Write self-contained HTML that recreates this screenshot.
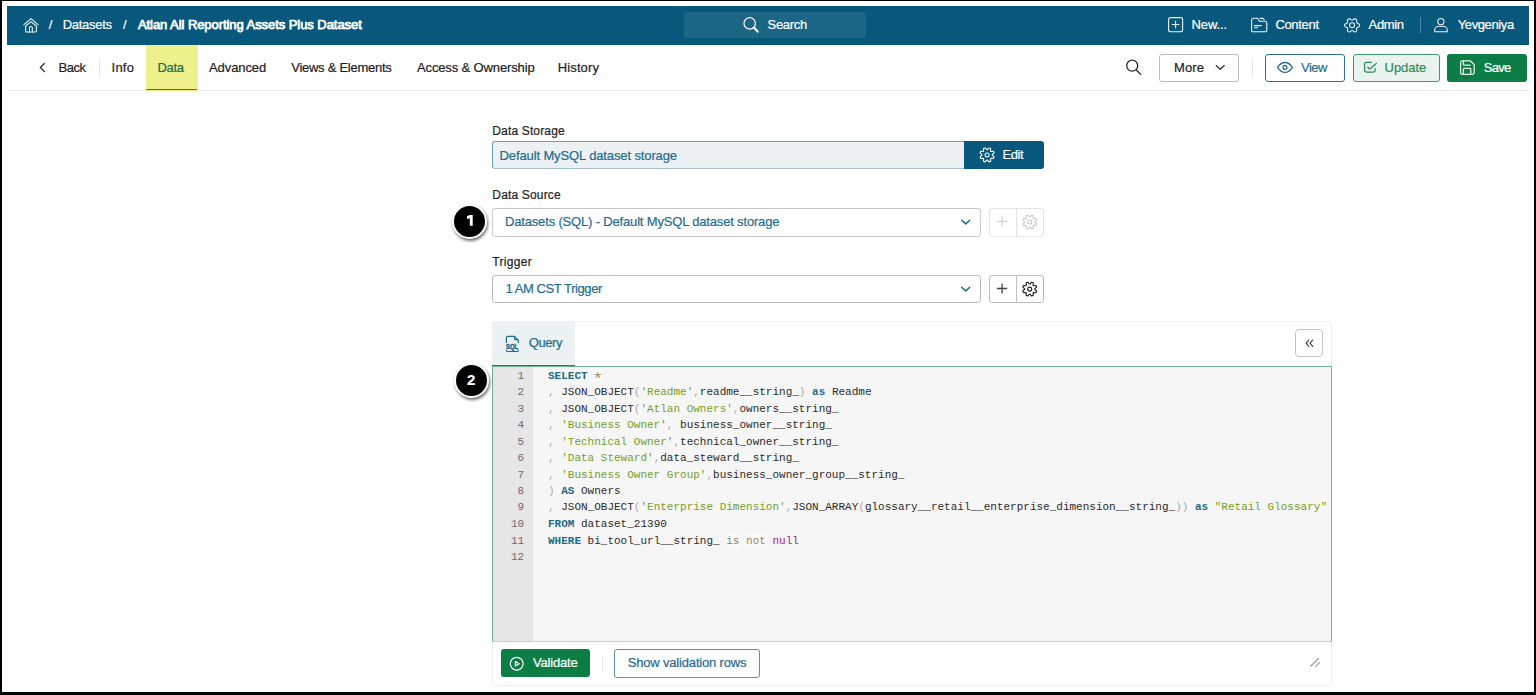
<!DOCTYPE html>
<html><head><meta charset="utf-8">
<style>
html,body{margin:0;padding:0}
body{width:1536px;height:695px;background:#000;position:relative;overflow:hidden;font-family:"Liberation Sans",sans-serif;}
.a{position:absolute;box-sizing:border-box}
.t{position:absolute;white-space:nowrap;line-height:1;font-size:13px;-webkit-text-stroke:0.2px currentColor}
.m{position:absolute;white-space:pre;font-family:"Liberation Mono",monospace;font-size:12px;line-height:18.289px;transform:scale(0.916667,0.9);transform-origin:0 0}
svg{position:absolute;overflow:visible}
.k{color:#1f6b8c;font-weight:bold}.p{color:#a8a8a8}.s{color:#74a02a}.i{color:#2b2b2b}.st{color:#8a7b6a}.op{color:#9c7f56;background:#fbfbfb}.nu{color:#a3247b}
</style></head><body>
<div class="a" style="left:2px;top:1px;width:1532px;height:691px;background:#fff"></div>

<!-- header -->
<div class="a" style="left:7px;top:6px;width:1522px;height:39px;background:#07587c"></div>
<div class="a" style="left:684px;top:12px;width:182px;height:26px;background:#1b6585;border-radius:3px"></div>

<div class="a" style="left:1420px;top:17px;width:1px;height:16px;background:#4d87a3"></div>

<!-- nav -->
<div class="a" style="left:7px;top:90px;width:1522px;height:1px;background:#e9e9e9"></div>
<div class="a" style="left:146px;top:45px;width:52px;height:45.6px;background:#edf08b"></div>
<div class="a" style="left:146px;top:88.7px;width:51px;height:1.4px;background:#3a7655;border-radius:1px"></div>
<div class="a" style="left:99px;top:60px;width:1px;height:16px;background:#e4e4e4"></div>

<!-- buttons -->
<div class="a" style="left:1159px;top:54px;width:80px;height:28px;border:1px solid #bdbdbd;border-radius:3px"></div>
<div class="a" style="left:1252px;top:60px;width:1px;height:16px;background:#e4e4e4"></div>
<div class="a" style="left:1265px;top:54px;width:80px;height:28px;border:1px solid #2f6f90;border-radius:3px"></div>
<div class="a" style="left:1353px;top:54px;width:87px;height:28px;border:1px solid #3e9a66;border-radius:3px;background:#ebf3ef"></div>
<div class="a" style="left:1447px;top:54px;width:80px;height:28px;border-radius:3px;background:#0b7d45"></div>

<!-- form -->
<div class="a" style="left:492px;top:141px;width:474px;height:28px;border:1px solid #6e9db5;border-bottom-color:#a7c3d1;border-right:0;border-radius:3px 0 0 3px;background:#ecf1f4"></div>
<div class="a" style="left:964px;top:141px;width:80px;height:28px;border-radius:0 3px 3px 0;background:#07587c"></div>

<div class="a" style="left:492px;top:208px;width:489px;height:29px;border:1px solid #c9c9c9;border-radius:3px;background:#fff"></div>
<div class="a" style="left:989px;top:208px;width:55px;height:29px;border:1px solid #e3e3e3;border-radius:3px"></div>
<div class="a" style="left:1016px;top:208px;width:1px;height:29px;background:#e3e3e3"></div>

<div class="a" style="left:492px;top:275px;width:489px;height:28px;border:1px solid #bdbdbd;border-radius:3px;background:#fff"></div>
<div class="a" style="left:989px;top:275px;width:55px;height:28px;border:1px solid #bdbdbd;border-radius:3px"></div>
<div class="a" style="left:1016px;top:275px;width:1px;height:28px;background:#bdbdbd"></div>

<!-- query panel -->
<div class="a" style="left:492px;top:321px;width:840px;height:365px;border:1px solid #efefef;border-radius:3px"></div>
<div class="a" style="left:492px;top:321px;width:83px;height:45px;background:#ecf1f4;border-radius:3px 0 0 0"></div>
<div class="a" style="left:492px;top:365px;width:83px;height:1px;background:#2b6f8f"></div>
<div class="a" style="left:1295px;top:329px;width:28px;height:28px;border:1px solid #c4c4c4;border-radius:4px;background:#fff"></div>

<div class="a" style="left:492px;top:366px;width:840px;height:276px;border:1px solid #6fb08d;border-bottom-color:#b5d8c3;background:#f6f6f6"></div>
<div class="a" style="left:493px;top:367px;width:40px;height:274px;background:#e6e6e6"></div>

<div id="code">
<div class="m ln" style="left:493.3px;top:367.6px;width:34px;text-align:right;color:#6b6b6b">1
2
3
4
5
6
7
8
9
10
11
12</div>
<div class="m" style="left:548px;top:367.6px;color:#2b2b2b"><span class="k">SELECT</span>  
<span class="p">, </span><span class="i">JSON_OBJECT</span><span class="p">(</span><span class="s">'Readme'</span><span class="p">,</span><span class="i">readme__string_</span><span class="p">)</span> <span class="k">as</span> <span class="i">Readme</span>
<span class="p">, </span><span class="i">JSON_OBJECT</span><span class="p">(</span><span class="s">'Atlan Owners'</span><span class="p">,</span><span class="i">owners__string_</span>
<span class="p">, </span><span class="s">'Business Owner'</span><span class="p">, </span><span class="i">business_owner__string_</span>
<span class="p">, </span><span class="s">'Technical Owner'</span><span class="p">,</span><span class="i">technical_owner__string_</span>
<span class="p">, </span><span class="s">'Data Steward'</span><span class="p">,</span><span class="i">data_steward__string_</span>
<span class="p">, </span><span class="s">'Business Owner Group'</span><span class="p">,</span><span class="i">business_owner_group__string_</span>
<span class="p">)</span> <span class="k">AS</span> <span class="i">Owners</span>
<span class="p">, </span><span class="i">JSON_OBJECT</span><span class="p">(</span><span class="s">'Enterprise Dimension'</span><span class="p">,</span><span class="i">JSON_ARRAY</span><span class="p">(</span><span class="i">glossary__retail__enterprise_dimension__string_</span><span class="p">))</span> <span class="k">as</span> <span class="s">"Retail Glossary"</span>
<span class="k">FROM</span> <span class="i">dataset_21390</span>
<span class="k">WHERE</span> <span class="i">bi_tool_url__string_</span> <span class="op">is</span> <span class="op">not</span> <span class="nu">null</span>
</div>
</div>

<!-- footer -->
<div class="a" style="left:501px;top:649px;width:89px;height:28px;border-radius:3px;background:#0b7d45"></div>
<div class="a" style="left:602px;top:656px;width:1px;height:16px;background:#e8e8e8"></div>
<div class="a" style="left:614px;top:649px;width:146px;height:29px;border:1px solid #5b8fab;border-radius:3px"></div>

<!-- badges -->
<div class="a" style="left:452px;top:204px;width:35px;height:35px;border-radius:50%;background:#000;border:2px solid #fff;box-shadow:1px 2px 3px rgba(0,0,0,.55)"></div>
<div class="a" style="left:454px;top:363px;width:35px;height:35px;border-radius:50%;background:#000;border:2px solid #fff;box-shadow:1px 2px 3px rgba(0,0,0,.55)"></div>

<div class="t" style="left:48.75px;top:18.40px;font-size:13px;color:#fff;letter-spacing:0.000px">/</div>
<div class="t" style="left:62.75px;top:18.40px;font-size:13px;color:#fff;letter-spacing:-0.293px">Datasets</div>
<div class="t" style="left:123.00px;top:18.40px;font-size:13px;color:#fff;letter-spacing:0.000px">/</div>
<div class="t" style="left:137.90px;top:18.40px;font-size:13px;color:#fff;letter-spacing:-0.060px;-webkit-text-stroke:0.75px #fff">Atlan All Reporting Assets Plus Dataset</div>
<div class="t" style="left:767.50px;top:18.40px;font-size:13px;color:#fff;letter-spacing:-0.292px">Search</div>
<div class="t" style="left:1191.50px;top:18.40px;font-size:13px;color:#fff;letter-spacing:-0.103px">New...</div>
<div class="t" style="left:1275.40px;top:18.40px;font-size:13px;color:#fff;letter-spacing:-0.320px">Content</div>
<div class="t" style="left:1368.60px;top:18.40px;font-size:13px;color:#fff;letter-spacing:-0.367px">Admin</div>
<div class="t" style="left:1457.75px;top:18.40px;font-size:13px;color:#fff;letter-spacing:-0.392px">Yevgeniya</div>
<div class="t" style="left:58.40px;top:60.90px;font-size:13px;color:#222;letter-spacing:-0.400px">Back</div>
<div class="t" style="left:111.50px;top:60.90px;font-size:13px;color:#222;letter-spacing:0.265px">Info</div>
<div class="t" style="left:157.50px;top:60.90px;font-size:13px;color:#1e6b4b;letter-spacing:-0.327px">Data</div>
<div class="t" style="left:209.00px;top:60.90px;font-size:13px;color:#222;letter-spacing:-0.084px">Advanced</div>
<div class="t" style="left:291.25px;top:60.90px;font-size:13px;color:#222;letter-spacing:-0.268px">Views &amp; Elements</div>
<div class="t" style="left:417.00px;top:60.90px;font-size:13px;color:#222;letter-spacing:-0.135px">Access &amp; Ownership</div>
<div class="t" style="left:557.75px;top:60.90px;font-size:13px;color:#222;letter-spacing:0.117px">History</div>
<div class="t" style="left:1174.00px;top:60.90px;font-size:13px;color:#222;letter-spacing:0.121px">More</div>
<div class="t" style="left:1301.00px;top:60.90px;font-size:13px;color:#2a6b8c;letter-spacing:-0.518px">View</div>
<div class="t" style="left:1384.60px;top:60.90px;font-size:13px;color:#2f8a58;letter-spacing:-0.058px">Update</div>
<div class="t" style="left:1483.75px;top:60.90px;font-size:13px;color:#fff;letter-spacing:-0.750px">Save</div>
<div class="t" style="left:492.30px;top:125.44px;font-size:12px;color:#222;letter-spacing:0.151px">Data Storage</div>
<div class="t" style="left:499.60px;top:148.60px;font-size:13px;color:#236b8e;letter-spacing:-0.123px">Default MySQL dataset storage</div>
<div class="t" style="left:1002.50px;top:148.00px;font-size:13px;color:#fff;letter-spacing:-0.430px">Edit</div>
<div class="t" style="left:492.30px;top:188.64px;font-size:12px;color:#222;letter-spacing:0.167px">Data Source</div>
<div class="t" style="left:505.00px;top:215.00px;font-size:13px;color:#1f6b92;letter-spacing:-0.168px">Datasets (SQL) - Default MySQL dataset storage</div>
<div class="t" style="left:492.30px;top:255.54px;font-size:12px;color:#222;letter-spacing:0.322px">Trigger</div>
<div class="t" style="left:505.40px;top:282.20px;font-size:13px;color:#1f6b92;letter-spacing:-0.409px">1 AM CST Trigger</div>
<div class="t" style="left:528.75px;top:335.90px;font-size:13px;color:#1f6b8c;letter-spacing:-0.413px">Query</div>
<div class="t" style="left:533.00px;top:656.00px;font-size:13px;color:#fff;letter-spacing:-0.183px">Validate</div>
<div class="t" style="left:627.75px;top:656.00px;font-size:13px;color:#27698b;letter-spacing:-0.177px">Show validation rows</div>
<div class="t" style="left:467.00px;top:372.30px;font-size:15px;font-weight:bold;color:#fff;letter-spacing:0.000px">2</div>
<svg class="ov" width="1536" height="695" viewBox="0 0 1536 695" style="left:0;top:0"><g fill="none" stroke="#fff" stroke-width="1.05" stroke-linecap="round" stroke-linejoin="round" opacity="0.95">
<path d="M23.7,24.8 L31,18.6 L38.3,24.8"/>
<path d="M25.7,32 V26 L31,21.6 L36.4,26 V30.9 a1.1,1.1 0 0 1 -1.1,1.1 H26.8 a1.1,1.1 0 0 1 -1.1,-1.1 Z"/>
<path d="M29.5,32 V27.8 a1.4,1.4 0 0 1 2.8,0 V32"/>
</g>
<g fill="none" stroke="#fff" stroke-width="1.25" stroke-linecap="round">
<circle cx="749.7" cy="23.4" r="5.7"/>
<path d="M754.3,28.1 L757.6,31.6" stroke-width="2.2"/>
</g>
<g fill="none" stroke="#fff" stroke-width="1.1" stroke-linecap="round" stroke-linejoin="round" opacity="0.93">
<rect x="1168.6" y="17.6" width="14" height="14.1" rx="2"/>
<path d="M1175.6,21.2 V28 M1172.2,24.6 H1179" stroke-width="1"/>
<path d="M1251.6,31 V20.2 a2,2 0 0 1 2,-2 H1257.6 l1.8,3 H1264.8 a2,2 0 0 1 2,2 V30.3 a1.5,1.5 0 0 1 -1.5,1.5 H1253.3 a1.7,1.7 0 0 1 -1.7,-0.8 Z"/>
<path d="M1260.2,18.4 H1263 l1.2,1.3"/>
<path d="M1254.4,25.6 H1261.2 M1254.4,27.7 H1257.6"/>
<path d="M1359.60,25.35 L1359.54,25.82 L1359.36,26.28 L1359.05,26.69 L1358.38,26.98 L1357.70,27.19 L1357.34,27.46 L1357.07,27.73 L1356.86,28.02 L1356.71,28.34 L1356.60,28.70 L1356.54,29.13 L1356.70,29.81 L1356.77,30.52 L1356.56,30.99 L1356.24,31.36 L1355.85,31.65 L1355.40,31.84 L1354.90,31.92 L1354.38,31.86 L1353.78,31.44 L1353.25,30.97 L1352.84,30.81 L1352.46,30.71 L1352.10,30.69 L1351.74,30.71 L1351.36,30.81 L1350.95,30.97 L1350.42,31.44 L1349.82,31.86 L1349.30,31.92 L1348.80,31.84 L1348.35,31.65 L1347.96,31.36 L1347.64,30.99 L1347.43,30.52 L1347.50,29.81 L1347.66,29.13 L1347.60,28.70 L1347.49,28.34 L1347.34,28.02 L1347.13,27.73 L1346.86,27.46 L1346.50,27.19 L1345.82,26.98 L1345.15,26.69 L1344.84,26.28 L1344.66,25.82 L1344.60,25.35 L1344.66,24.88 L1344.84,24.42 L1345.15,24.01 L1345.82,23.72 L1346.50,23.51 L1346.86,23.24 L1347.13,22.97 L1347.34,22.68 L1347.49,22.36 L1347.60,22.00 L1347.66,21.57 L1347.50,20.89 L1347.43,20.18 L1347.64,19.71 L1347.96,19.34 L1348.35,19.05 L1348.80,18.86 L1349.30,18.78 L1349.82,18.84 L1350.42,19.26 L1350.95,19.73 L1351.36,19.89 L1351.74,19.99 L1352.10,20.02 L1352.46,19.99 L1352.84,19.89 L1353.25,19.73 L1353.78,19.26 L1354.38,18.84 L1354.90,18.78 L1355.40,18.86 L1355.85,19.05 L1356.24,19.34 L1356.56,19.71 L1356.77,20.18 L1356.70,20.89 L1356.54,21.57 L1356.60,22.00 L1356.71,22.36 L1356.86,22.68 L1357.07,22.97 L1357.34,23.24 L1357.70,23.51 L1358.38,23.72 L1359.05,24.01 L1359.36,24.42 L1359.54,24.88 Z"/>
<circle cx="1352.1" cy="25.3" r="2.5"/>
<circle cx="1440.9" cy="21.6" r="3.1"/>
<path d="M1434.6,31.4 V30.6 a4.3,4.3 0 0 1 4.3,-4.3 H1443 a4.3,4.3 0 0 1 4.3,4.3 V31.4 a0.4,0.4 0 0 1 -0.4,0.4 H1435 a0.4,0.4 0 0 1 -0.4,-0.4 Z"/>
</g>
<path d="M44.4,63.5 L40.3,67.5 L44.4,71.5" fill="none" stroke="#333" stroke-width="1.3" stroke-linecap="round" stroke-linejoin="round"/>
<g fill="none" stroke="#222" stroke-width="1.25" stroke-linecap="round">
<circle cx="1132.2" cy="65.7" r="5.5"/>
<path d="M1136.3,70 L1140.6,74.4"/>
</g>
<path d="M1216.2,65.6 L1220.2,69.3 L1224.3,65.6" fill="none" stroke="#333" stroke-width="1.3" stroke-linecap="round" stroke-linejoin="round"/>
<g fill="none" stroke="#2a6b8c" stroke-width="1.3" stroke-linecap="round" stroke-linejoin="round">
<path d="M1277.6,67.4 C1279.6,64.1 1282,62.5 1285,62.5 C1288,62.5 1290.4,64.1 1292.4,67.4 C1290.4,70.7 1288,72.4 1285,72.4 C1282,72.4 1279.6,70.7 1277.6,67.4 Z"/>
<circle cx="1285" cy="67.4" r="1.9"/>
</g>
<g fill="none" stroke="#2e8a58" stroke-width="1.3" stroke-linecap="round" stroke-linejoin="round">
<path d="M1371.6,62.3 H1366.4 a1.8,1.8 0 0 0 -1.8,1.8 V70.3 a1.8,1.8 0 0 0 1.8,1.8 H1373.4 a1.8,1.8 0 0 0 1.8,-1.8 V68.6"/>
<path d="M1367.8,67.3 L1369.6,69.1 L1376.3,63.4"/>
</g>
<g fill="none" stroke="#fff" stroke-width="1.25" stroke-linecap="round" stroke-linejoin="round" opacity="0.92">
<path d="M1462.4,60.8 H1470.3 L1474.2,64.7 V72.6 a1.8,1.8 0 0 1 -1.8,1.8 H1462.4 a1.8,1.8 0 0 1 -1.8,-1.8 V62.6 a1.8,1.8 0 0 1 1.8,-1.8 Z"/>
<path d="M1463.4,61 V64.4 a0.8,0.8 0 0 0 0.8,0.8 H1470"/>
<path d="M1463.4,74.3 V69.2 a0.8,0.8 0 0 1 0.8,-0.8 H1470 a0.8,0.8 0 0 1 0.8,0.8 V74.3"/>
</g>
<g fill="none" stroke="#fff" stroke-width="1.05" stroke-linejoin="round">
<path d="M992.29,154.58 L994.13,152.95 L993.45,151.31 L990.99,151.45 L990.55,151.01 L990.69,148.55 L989.05,147.87 L987.42,149.71 L986.78,149.71 L985.15,147.87 L983.51,148.55 L983.65,151.01 L983.21,151.45 L980.75,151.31 L980.07,152.95 L981.91,154.58 L981.91,155.22 L980.07,156.85 L980.75,158.49 L983.21,158.35 L983.65,158.79 L983.51,161.25 L985.15,161.93 L986.78,160.09 L987.42,160.09 L989.05,161.93 L990.69,161.25 L990.55,158.79 L990.99,158.35 L993.45,158.49 L994.13,156.85 L992.29,155.22 Z"/>
<circle cx="987.1" cy="154.9" r="2.0"/>
</g>
<path d="M961.6,220.3 L965.7,223.9 L969.8,220.3" fill="none" stroke="#1f6d8f" stroke-width="1.5" stroke-linecap="round" stroke-linejoin="round"/>
<path d="M1002.1,216.2 V226.6 M996.9,221.4 H1007.3" fill="none" stroke="#d2d2d2" stroke-width="1.1"/>
<g fill="none" stroke="#c8c8c8" stroke-width="1.05" stroke-linejoin="round"><path d="M1034.79,221.69 L1036.64,220.08 L1035.97,218.45 L1033.52,218.62 L1033.08,218.18 L1033.25,215.73 L1031.62,215.06 L1030.01,216.91 L1029.39,216.91 L1027.78,215.06 L1026.15,215.73 L1026.32,218.18 L1025.88,218.62 L1023.43,218.45 L1022.76,220.08 L1024.61,221.69 L1024.61,222.31 L1022.76,223.92 L1023.43,225.55 L1025.88,225.38 L1026.32,225.82 L1026.15,228.27 L1027.78,228.94 L1029.39,227.09 L1030.01,227.09 L1031.62,228.94 L1033.25,228.27 L1033.08,225.82 L1033.52,225.38 L1035.97,225.55 L1036.64,223.92 L1034.79,222.31 Z"/><circle cx="1029.7" cy="222" r="2.0"/></g>
<path d="M961.6,287.3 L965.7,290.9 L969.8,287.3" fill="none" stroke="#1f6d8f" stroke-width="1.5" stroke-linecap="round" stroke-linejoin="round"/>
<path d="M1002.1,283.4 V293.6 M996.9,288.5 H1007.2" fill="none" stroke="#444" stroke-width="1.3"/>
<g fill="none" stroke="#222" stroke-width="1.15" stroke-linejoin="round"><path d="M1034.79,288.79 L1036.64,287.18 L1035.97,285.55 L1033.52,285.72 L1033.08,285.28 L1033.25,282.83 L1031.62,282.16 L1030.01,284.01 L1029.39,284.01 L1027.78,282.16 L1026.15,282.83 L1026.32,285.28 L1025.88,285.72 L1023.43,285.55 L1022.76,287.18 L1024.61,288.79 L1024.61,289.41 L1022.76,291.02 L1023.43,292.65 L1025.88,292.48 L1026.32,292.92 L1026.15,295.37 L1027.78,296.04 L1029.39,294.19 L1030.01,294.19 L1031.62,296.04 L1033.25,295.37 L1033.08,292.92 L1033.52,292.48 L1035.97,292.65 L1036.64,291.02 L1034.79,289.41 Z"/><circle cx="1029.7" cy="289.1" r="2.0"/></g>
<g fill="none" stroke="#1f6b8c" stroke-width="1.2" stroke-linecap="round" stroke-linejoin="round">
<path d="M506.4,342.4 V337.8 a1.4,1.4 0 0 1 1.4,-1.4 H514.5 L518.2,340.1 V342.4"/>
<path d="M514.5,336.6 V338.8 a0.8,0.8 0 0 0 0.8,0.8 H518"/>
<path d="M506.4,350.2 a1.3,1.3 0 0 0 1.3,1.3 H517 a1.3,1.3 0 0 0 1.3,-1.3"/>
</g>
<text x="506.1" y="348.8" font-family="Liberation Sans" font-weight="bold" font-size="6.4" fill="#1f6b8c" stroke="#1f6b8c" stroke-width="0.45" textLength="12.0" lengthAdjust="spacingAndGlyphs">SQL</text>
<rect x="593.7" y="368.3" width="8.3" height="13.5" fill="#fafafa"/>
<path d="M597.8,372.3 V375 M597.8,375 L594.9,374.3 M597.8,375 L600.7,374.3 M597.8,375 L596.1,377.4 M597.8,375 L599.5,377.4" fill="none" stroke="#a3865c" stroke-width="1.05" stroke-linecap="round"/>
<path d="M1308.8,340.2 L1306.1,343.2 L1308.8,346.3 M1312.7,340.2 L1310,343.2 L1312.7,346.3" fill="none" stroke="#444" stroke-width="1.25" stroke-linecap="round" stroke-linejoin="round"/>
<g fill="none" stroke="#fff" stroke-width="1.2" stroke-linejoin="round"><circle cx="516.7" cy="663.7" r="6.4"/><path d="M515.4,661.4 V666.1 L519.2,663.75 Z"/></g>
<path d="M1310.6,666.3 L1318.6,658.5 M1315.8,666.3 L1319.5,662.6" fill="none" stroke="#9a9a9a" stroke-width="1.2" stroke-linecap="round"/>
<path d="M467,216.3 L469.6,215.1 H472.7 V225.8 H469.8 V218.3 L467,218.9 Z" fill="#fff"/></svg>
</body></html>
